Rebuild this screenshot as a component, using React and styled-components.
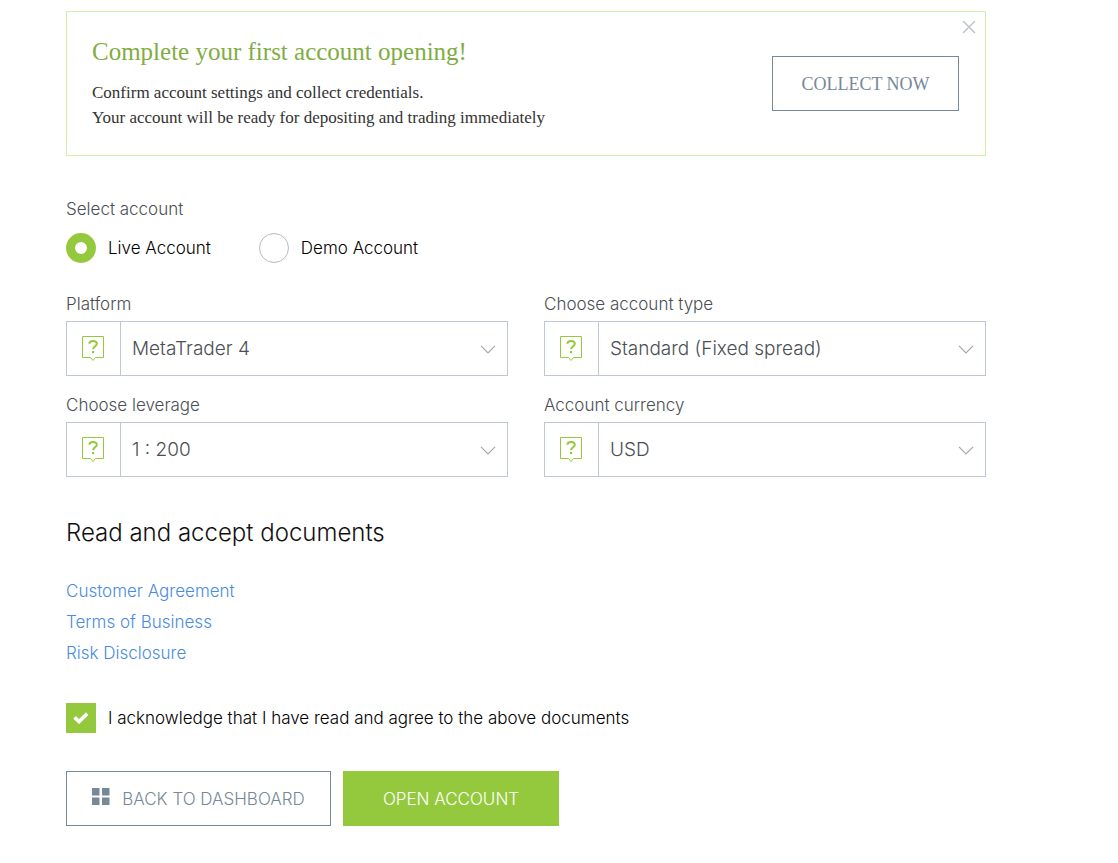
import { useState } from 'react';
import styled, { createGlobalStyle } from 'styled-components';

const fields = [
  { id: 'platform', label: 'Platform', options: ['MetaTrader 4', 'MetaTrader 5'] },
  { id: 'type', label: 'Choose account type', options: ['Standard (Fixed spread)', 'Standard (Floating spread)'] },
  { id: 'leverage', label: 'Choose leverage', options: ['1 : 200', '1 : 100', '1 : 50'] },
  { id: 'currency', label: 'Account currency', options: ['USD', 'EUR', 'GBP'] },
];

const documents = ['Customer Agreement', 'Terms of Business', 'Risk Disclosure'];

export default function App() {
  const [accountKind, setAccountKind] = useState('live');
  const [accepted, setAccepted] = useState(true);
  const [showBanner, setShowBanner] = useState(true);

  return (
    <>
      <GlobalStyle />
      <Page>
        {showBanner && <AccountBanner onClose={() => setShowBanner(false)} />}

        <AccountKind>
          <legend>Select account</legend>
          <RadioRow>
            <OptionLabel>
              <Radio name="kind" checked={accountKind === 'live'} onChange={() => setAccountKind('live')} />
              Live Account
            </OptionLabel>
            <OptionLabel>
              <Radio name="kind" checked={accountKind === 'demo'} onChange={() => setAccountKind('demo')} />
              Demo Account
            </OptionLabel>
          </RadioRow>
        </AccountKind>

        <FieldGrid>
          {fields.map((field) => (
            <SelectField key={field.id} field={field} />
          ))}
        </FieldGrid>

        <SectionTitle>Read and accept documents</SectionTitle>
        <DocumentList>
          {documents.map((name) => (
            <li key={name}>
              <DocumentLink href="#">{name}</DocumentLink>
            </li>
          ))}
        </DocumentList>

        <OptionLabel>
          <CheckWrapper>
            <Checkbox checked={accepted} onChange={(e) => setAccepted(e.target.checked)} />
            {accepted && <CheckIcon />}
          </CheckWrapper>
          I acknowledge that I have read and agree to the above documents
        </OptionLabel>

        <Actions>
          <Button $minWidth="265px">
            <DashboardIcon />
            BACK TO DASHBOARD
          </Button>
          <Button $primary $minWidth="216px">
            OPEN ACCOUNT
          </Button>
        </Actions>
      </Page>
    </>
  );
}

function AccountBanner({ onClose }) {
  return (
    <Banner>
      <BannerBody>
        <BannerTitle>Complete your first account opening!</BannerTitle>
        <BannerText>
          Confirm account settings and collect credentials.
          <br />
          Your account will be ready for depositing and trading immediately
        </BannerText>
      </BannerBody>
      <Button $serif $minWidth="187px">
        COLLECT NOW
      </Button>
      <CloseButton aria-label="Close" onClick={onClose}>
        <svg width="14" height="14" viewBox="0 0 14 14" fill="none" stroke="#bdc4ce" strokeWidth="1.5">
          <path d="M1 1L13 13M13 1L1 13" />
        </svg>
      </CloseButton>
    </Banner>
  );
}

function SelectField({ field }) {
  return (
    <div>
      <FieldLabel htmlFor={field.id}>{field.label}</FieldLabel>
      <SelectBox>
        <HelpButton type="button" aria-label={`Help: ${field.label}`}>
          <HelpIcon />
        </HelpButton>
        <Select id={field.id}>
          {field.options.map((option) => (
            <option key={option}>{option}</option>
          ))}
        </Select>
        <ChevronIcon />
      </SelectBox>
    </div>
  );
}

function HelpIcon() {
  return (
    <svg width="23" height="26" viewBox="0 0 23 26" fill="none" stroke="#94c93d">
      <path d="M.5 .5H21.5V21.5H13.5L11 24.5L8.5 21.5H.5Z" />
      <path d="M7.4 7.8C7.4 5.8 8.9 4.9 11 4.9C13.2 4.9 14.8 5.9 14.8 7.8C14.8 10.2 11.1 10.3 11.1 13.2" strokeWidth="2" />
      <path d="M10 15H12.2V17.2H10Z" fill="#94c93d" stroke="none" />
    </svg>
  );
}

function ChevronIcon() {
  return (
    <Chevron width="16" height="10" viewBox="0 0 16 10" fill="none" stroke="#a3a6aa" strokeWidth="1.2">
      <path d="M1 .9L8 7.9L15 .9" />
    </Chevron>
  );
}

function CheckIcon() {
  return (
    <svg width="16" height="12" viewBox="0 0 16 12" fill="none" stroke="#fff" strokeWidth="3.6">
      <path d="M1.6 5.4L6 9.6L14.2 1.6" />
    </svg>
  );
}

function DashboardIcon() {
  return (
    <svg width="18" height="21" viewBox="0 0 18 21" fill="#778899">
      <path d="M0 0H7.5V7.5H0ZM10 0H17.5V7.5H10ZM0 9.5H7.5V17H0ZM10 9.5H17.5V17H10Z" />
    </svg>
  );
}

const GlobalStyle = createGlobalStyle`
  * {
    box-sizing: border-box;
  }
  body {
    margin: 0;
    background: #fff;
    color: #000;
    font-family: Inter, 'Liberation Sans', sans-serif;
    font-size: 17px;
    font-weight: 300;
    line-height: 24px;
  }
  button,
  select {
    font: inherit;
    cursor: pointer;
  }
`;

const Page = styled.main`
  max-width: 1118px;
  padding: 11px 132px 37px 66px;
`;

const Banner = styled.section`
  position: relative;
  display: flex;
  align-items: center;
  justify-content: space-between;
  min-height: 145px;
  padding: 0 26px 0 25px;
  border: 1px solid #d2f0a5;
  font-family: 'Liberation Serif', serif;
  font-weight: 400;
`;

const BannerBody = styled.div`
  padding: 20px 20px 24px 0;
`;

const BannerTitle = styled.h2`
  margin: 0 0 10px;
  color: #80ad42;
  font-size: 25px;
  font-weight: 400;
  line-height: 36px;
`;

const BannerText = styled.p`
  margin: 0;
  color: #333;
  font-size: 17px;
  line-height: 25px;
`;

const CloseButton = styled.button`
  position: absolute;
  top: 8px;
  right: 9px;
  display: flex;
  padding: 0;
  border: 0;
  background: none;
`;

const AccountKind = styled.fieldset`
  margin: 41px 0 29px;
  padding: 0;
  border: 0;

  legend {
    padding: 0;
    color: #4a4f55;
  }
`;

const RadioRow = styled.div`
  display: flex;
  flex-wrap: wrap;
  gap: 12px 48px;
  margin-top: 12px;
`;

const OptionLabel = styled.label`
  display: flex;
  align-items: center;
  gap: 12px;
`;

const Radio = styled.input.attrs({ type: 'radio' })`
  flex: none;
  appearance: none;
  width: 30px;
  height: 30px;
  margin: 0;
  border: 1px solid #b4bac4;
  border-radius: 50%;
  background: #fff;

  &:checked {
    border: 9px solid #94c93d;
  }
`;

const FieldGrid = styled.div`
  display: grid;
  grid-template-columns: repeat(auto-fit, minmax(320px, 1fr));
  gap: 17px 36px;
`;

const FieldLabel = styled.label`
  display: block;
  margin-bottom: 5px;
  color: #4a4f55;
`;

const SelectBox = styled.div`
  position: relative;
  display: flex;
  height: 55px;
  border: 1px solid #c0c8d6;
`;

const HelpButton = styled.button`
  display: flex;
  align-items: center;
  justify-content: center;
  flex: none;
  width: 54px;
  padding: 0;
  border: 0;
  border-right: 1px solid #c0c8d6;
  background: none;
`;

const Select = styled.select`
  flex: 1;
  min-width: 0;
  appearance: none;
  padding: 0 40px 0 11px;
  border: 0;
  background: none;
  color: #4a4f55;
  font-size: 19px;
`;

const Chevron = styled.svg`
  position: absolute;
  top: 23px;
  right: 11px;
  pointer-events: none;
`;

const SectionTitle = styled.h2`
  margin: 40px 0 27px;
  color: #111;
  font-size: 24px;
  font-weight: 300;
  line-height: 32px;
`;

const DocumentList = styled.ul`
  margin: 0 0 34px;
  padding: 0;
  list-style: none;
  line-height: 31px;
`;

const DocumentLink = styled.a`
  color: #4a8be0;
  text-decoration: none;
`;

const CheckWrapper = styled.span`
  display: grid;
  place-items: center;

  > * {
    grid-area: 1 / 1;
  }

  svg {
    pointer-events: none;
  }
`;

const Checkbox = styled.input.attrs({ type: 'checkbox' })`
  appearance: none;
  width: 30px;
  height: 30px;
  margin: 0;
  border: 1px solid #b4bac4;

  &:checked {
    border-color: #94c93d;
    background: #94c93d;
  }
`;

const Actions = styled.div`
  display: flex;
  flex-wrap: wrap;
  gap: 12px;
  margin-top: 38px;
`;

const Button = styled.button`
  display: flex;
  align-items: center;
  justify-content: center;
  gap: 12px;
  min-width: ${(props) => props.$minWidth};
  height: 55px;
  padding: 0 20px;
  border: 1px solid ${(props) => (props.$primary ? '#94c93d' : '#778899')};
  background: ${(props) => (props.$primary ? '#94c93d' : '#fff')};
  color: ${(props) => (props.$primary ? '#fff' : '#778899')};
  font-size: ${(props) => (props.$serif ? '18px' : '17px')};
`;
